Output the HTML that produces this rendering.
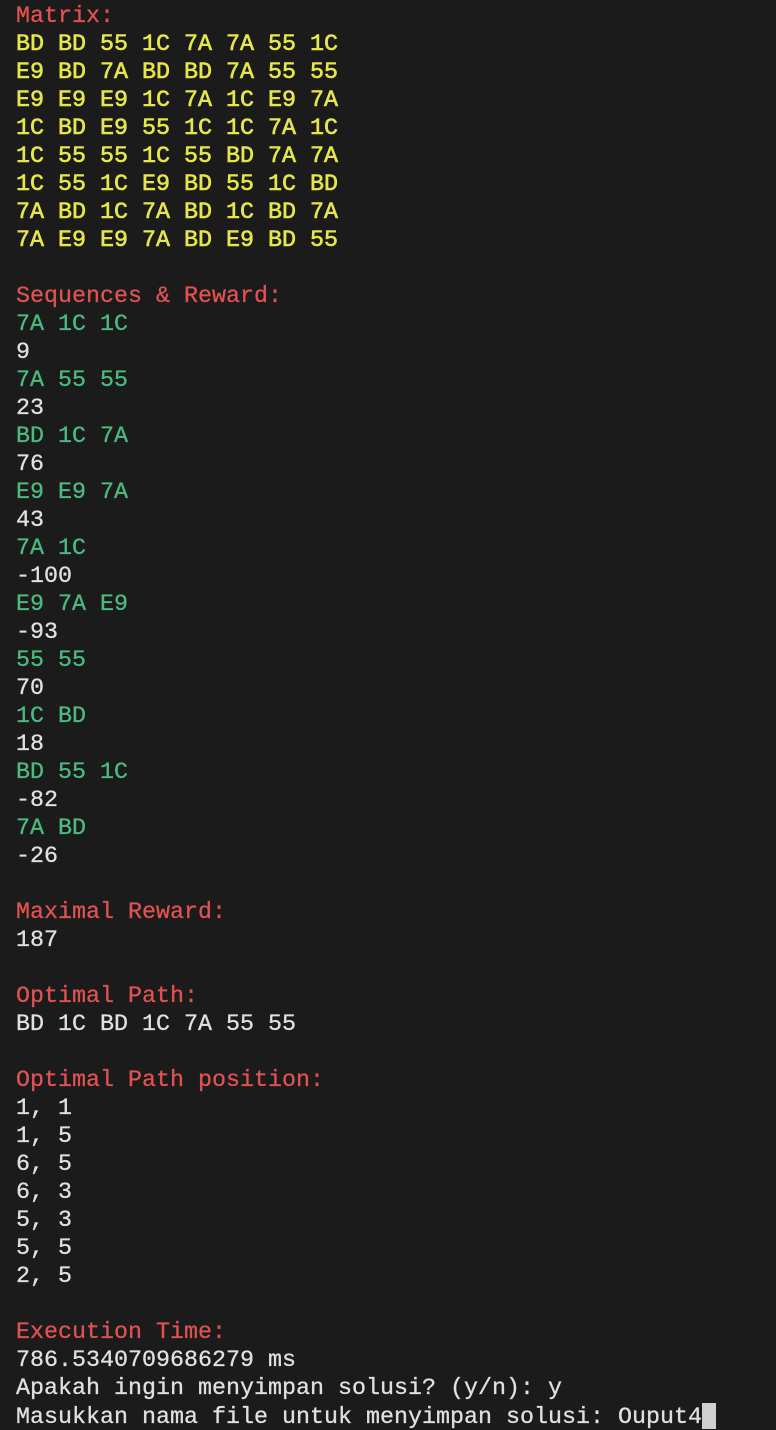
<!DOCTYPE html>
<html><head><meta charset="utf-8"><style>
html,body{margin:0;padding:0;background:#1b1b1b;width:776px;height:1430px;overflow:hidden}
pre{margin:0;padding:3px 0 0 16px;font-family:"Liberation Mono",monospace;font-size:23.33px;line-height:28px;color:#e0e0e0;-webkit-text-stroke:0.3px currentColor}
.r{color:#e05252}.y{color:#e6e64c;-webkit-text-stroke:0.6px currentColor}.g{color:#4cbb7f}
.c{background:#d0d0d0;display:inline-block;width:14px;height:26px;vertical-align:-6px}
</style></head><body><pre><span class="r">Matrix:</span>
<span class="y">BD BD 55 1C 7A 7A 55 1C
E9 BD 7A BD BD 7A 55 55
E9 E9 E9 1C 7A 1C E9 7A
1C BD E9 55 1C 1C 7A 1C
1C 55 55 1C 55 BD 7A 7A
1C 55 1C E9 BD 55 1C BD
7A BD 1C 7A BD 1C BD 7A
7A E9 E9 7A BD E9 BD 55</span>

<span class="r">Sequences &amp; Reward:</span>
<span class="g">7A 1C 1C</span>
9
<span class="g">7A 55 55</span>
23
<span class="g">BD 1C 7A</span>
76
<span class="g">E9 E9 7A</span>
43
<span class="g">7A 1C</span>
-100
<span class="g">E9 7A E9</span>
-93
<span class="g">55 55</span>
70
<span class="g">1C BD</span>
18
<span class="g">BD 55 1C</span>
-82
<span class="g">7A BD</span>
-26

<span class="r">Maximal Reward:</span>
187

<span class="r">Optimal Path:</span>
BD 1C BD 1C 7A 55 55

<span class="r">Optimal Path position:</span>
1, 1
1, 5
6, 5
6, 3
5, 3
5, 5
2, 5

<span class="r">Execution Time:</span>
786.5340709686279 ms
Apakah ingin menyimpan solusi? (y/n): y
Masukkan nama file untuk menyimpan solusi: Ouput4<span class="c"></span></pre></body></html>
